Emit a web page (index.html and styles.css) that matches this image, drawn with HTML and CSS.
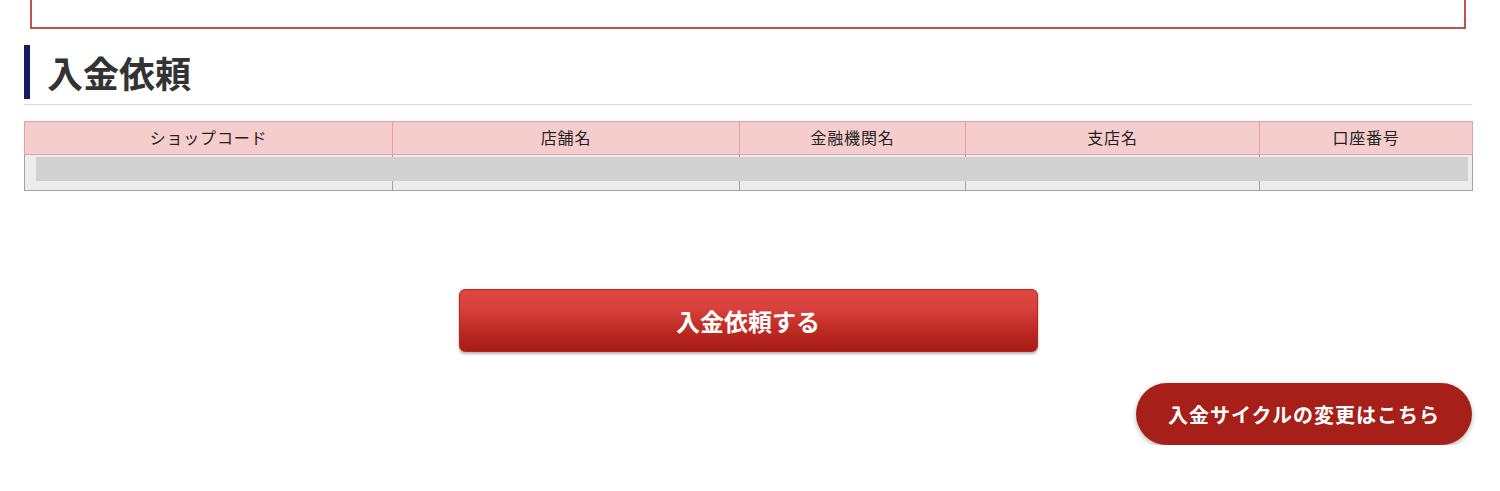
FILE: index.html
```html
<!DOCTYPE html>
<html lang="ja">
<head>
<meta charset="utf-8">
<title>入金依頼</title>
<link rel="stylesheet" href="styles.css">
</head>
<body>
<div class="page">
  <div class="top-box"></div>
  <h2 class="section-title"><span class="section-title__text">入金依頼</span></h2>
  <div class="table-wrap">
    <table class="shop-table">
      <colgroup>
        <col class="c1"><col class="c2"><col class="c3"><col class="c4"><col class="c5">
      </colgroup>
      <thead>
        <tr>
          <th>ショップコード</th>
          <th>店舗名</th>
          <th>金融機関名</th>
          <th>支店名</th>
          <th>口座番号</th>
        </tr>
      </thead>
      <tbody>
        <tr>
          <td></td><td></td><td></td><td></td><td></td>
        </tr>
      </tbody>
    </table>
    <div class="row-mask"></div>
  </div>
  <div class="actions">
    <button class="btn-primary" type="button">入金依頼する</button>
  </div>
  <div class="links">
    <a class="btn-pill" href="#">入金サイクルの変更はこちら</a>
  </div>
</div>
</body>
</html>
```

FILE: styles.css
```css
* { box-sizing: border-box; }
html, body { margin: 0; padding: 0; background: #fff; }
body {
  font-family: "Noto Sans CJK JP", "Noto Sans", sans-serif;
  color: #333;
}
.page {
  width: 1448px;
  margin-left: 24px;
}
.top-box {
  margin: 0 6px;
  height: 29px;
  border: 2px solid #c0524e;
  border-top: 0;
}
.section-title {
  margin: 16px 0 0;
  padding-bottom: 5px;
  border-bottom: 1px solid #d9d9d9;
  font-size: 36px;
  font-weight: 700;
  line-height: 1;
}
.section-title__text {
  display: flex;
  align-items: center;
  height: 54px;
  border-left: 6px solid #141d5f;
  padding-left: 17px;
  color: #333;
}
.table-wrap {
  position: relative;
  margin-top: 16px;
}
.shop-table {
  width: 100%;
  border-collapse: collapse;
  table-layout: fixed;
}
.c1 { width: 368px; }
.c2 { width: 347px; }
.c3 { width: 226px; }
.c4 { width: 294px; }
.c5 { width: 213px; }
.shop-table th {
  height: 33px;
  padding: 0 0 2px;
  background: #f6cdcd;
  border: 1px solid #e2a3a3;
  font-size: 16px;
  letter-spacing: 0.05em;
  font-weight: 400;
  color: #222;
  text-align: center;
  vertical-align: middle;
}
.shop-table td {
  height: 36px;
  padding: 0;
  background: #ececec;
  border: 1px solid #a3a3a3;
}
.row-mask {
  position: absolute;
  top: 36px;
  left: 12px;
  right: 4px;
  height: 24px;
  background: #d1d1d1;
}
.actions {
  display: flex;
  justify-content: center;
  margin-top: 98px;
}
.btn-primary {
  width: 579px;
  height: 63px;
  border: 1px solid #b3261f;
  border-radius: 6px;
  background: linear-gradient(#de4642 0%, #d9413d 28%, #b9271f 72%, #a71c16 100%);
  box-shadow: 0 2px 3px rgba(0, 0, 0, 0.3);
  color: #fff;
  font-family: "Noto Sans CJK JP", "Noto Sans", sans-serif;
  font-size: 24px;
  font-weight: 700;
  cursor: pointer;
}
.links {
  display: flex;
  justify-content: flex-end;
  margin-top: 31px;
}
.btn-pill {
  display: flex;
  align-items: center;
  justify-content: center;
  width: 336px;
  height: 62px;
  border-radius: 31px;
  background: #a61f19;
  box-shadow: 0 2px 5px rgba(0, 0, 0, 0.3);
  color: #fff;
  text-decoration: none;
  font-size: 20px;
  letter-spacing: 0.05em;
  font-weight: 700;
}
```
